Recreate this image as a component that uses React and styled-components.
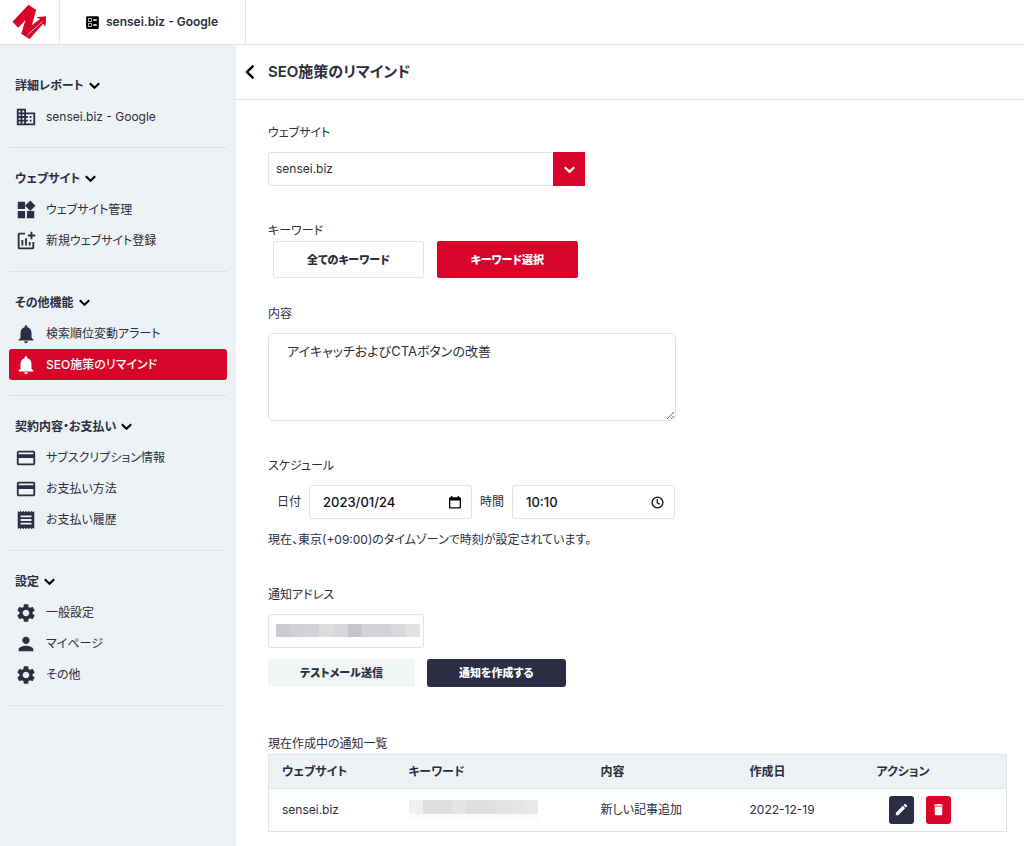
import React, { useState } from "react";
import styled, { createGlobalStyle } from "styled-components";
import {
  MdAddchart,
  MdBallot,
  MdBusiness,
  MdCreditCard,
  MdDelete,
  MdEdit,
  MdNotifications,
  MdPerson,
  MdReceipt,
  MdSettings,
  MdWidgets,
} from "react-icons/md";

const menu = [
  {
    title: "詳細レポート",
    items: [{ label: "sensei.biz - Google", icon: MdBusiness }],
  },
  {
    title: "ウェブサイト",
    items: [
      { label: "ウェブサイト管理", icon: MdWidgets },
      { label: "新規ウェブサイト登録", icon: MdAddchart },
    ],
  },
  {
    title: "その他機能",
    items: [
      { label: "検索順位変動アラート", icon: MdNotifications },
      { label: "SEO施策のリマインド", icon: MdNotifications, active: true },
    ],
  },
  {
    title: "契約内容・お支払い",
    items: [
      { label: "サブスクリプション情報", icon: MdCreditCard },
      { label: "お支払い方法", icon: MdCreditCard },
      { label: "お支払い履歴", icon: MdReceipt },
    ],
  },
  {
    title: "設定",
    items: [
      { label: "一般設定", icon: MdSettings },
      { label: "マイページ", icon: MdPerson },
      { label: "その他", icon: MdSettings },
    ],
  },
];

const emailBlocks = ["#cbcad1", "#d0cfd5", "#d2d2d6", "#dddddf", "#d8d8db", "#c5c4cc", "#d2d1d7", "#d2d1d7", "#d9d9db", "#e2e2e3"];
const keywordBlocks = ["#edf1f3", "#dedede", "#dedede", "#e4e5e5", "#dfdfdf", "#e0e0e0", "#e4e4e4", "#e6e6e7", "#e7e8e8"];

function Chevron({ color = "#000" }) {
  return (
    <svg width="11" height="11" viewBox="0 0 11 11" fill="none" stroke={color} strokeWidth="2" aria-hidden="true">
      <path d="M0.8 3.2 5.5 7.8 10.2 3.2" />
    </svg>
  );
}

function Logo() {
  return (
    <svg width="35" height="36" viewBox="12 13 104 108" aria-hidden="true">
      <path
        fill="#d90429"
        d="M13 66 61 15 84 31 71 77 96 58 84 53 114 50 112 81 105 72 64 118 39 102 52 61 30 84Z"
      />
      <path fill="none" stroke="#fff" strokeWidth="2" d="M58 106 103 65" />
    </svg>
  );
}

function App() {
  const [content, setContent] = useState("アイキャッチおよびCTAボタンの改善");
  const [date, setDate] = useState("2023/01/24");
  const [time, setTime] = useState("10:10");

  return (
    <Page>
      <GlobalStyle />
      <TopBar>
        <LogoLink href="#" aria-label="ホーム">
          <Logo />
        </LogoLink>
        <SiteTab href="#">
          <MdBallot />
          sensei.biz - Google
        </SiteTab>
      </TopBar>
      <Body>
        <Sidebar>
          {menu.map((section) => (
            <Section key={section.title}>
              <SectionTitle type="button">
                {section.title}
                <Chevron />
              </SectionTitle>
              {section.items.map(({ label, icon: Icon, active }) => (
                <MenuLink key={label} href="#" $active={active}>
                  <Icon />
                  {label}
                </MenuLink>
              ))}
            </Section>
          ))}
        </Sidebar>
        <Main>
          <TitleBar>
            <BackButton type="button" aria-label="戻る">
              <svg width="10" height="16" viewBox="0 0 10 16" fill="none" stroke="#000" strokeWidth="2.4">
                <path d="M8.4 1.6 2 8l6.4 6.4" />
              </svg>
            </BackButton>
            <h1>SEO施策のリマインド</h1>
          </TitleBar>
          <Form onSubmit={(e) => e.preventDefault()}>
            <Field>
              <Label htmlFor="website">ウェブサイト</Label>
              <SelectBox>
                <select id="website" defaultValue="sensei.biz">
                  <option>sensei.biz</option>
                </select>
                <span>
                  <Chevron color="#fff" />
                </span>
              </SelectBox>
            </Field>
            <Field $gap="0" $space="26px">
              <Label as="div">キーワード</Label>
              <KeywordButtons>
                <ChoiceButton type="button">全てのキーワード</ChoiceButton>
                <ChoiceButton type="button" $selected>
                  キーワード選択
                </ChoiceButton>
              </KeywordButtons>
            </Field>
            <Field>
              <Label htmlFor="content">内容</Label>
              <TextArea id="content" value={content} onChange={(e) => setContent(e.target.value)} />
            </Field>
            <Field>
              <Label as="div">スケジュール</Label>
              <Schedule>
                <label htmlFor="date">日付</label>
                <PickerBox>
                  <input id="date" value={date} onChange={(e) => setDate(e.target.value)} />
                  <svg width="12" height="13" viewBox="0 0 12 13" aria-hidden="true">
                    <path
                      fill="#000"
                      fillRule="evenodd"
                      d="M2 0h1.4v1.2h5.2V0H10v1.2h.7c.7 0 1.3.6 1.3 1.3v8.7c0 .7-.6 1.3-1.3 1.3H1.3C.6 12.5 0 11.9 0 11.2V2.5c0-.7.6-1.3 1.3-1.3H2ZM1.3 4.4v6.8h9.4V4.4Z"
                    />
                  </svg>
                </PickerBox>
                <label htmlFor="time">時間</label>
                <PickerBox>
                  <input id="time" value={time} onChange={(e) => setTime(e.target.value)} />
                  <svg width="13" height="13" viewBox="0 0 13 13" fill="none" stroke="#111" strokeWidth="1.3" aria-hidden="true">
                    <circle cx="6.5" cy="6.5" r="5.4" />
                    <path d="M6.3 3.3v3.5l2.5 1.5" />
                  </svg>
                </PickerBox>
              </Schedule>
              <Note>現在、東京(+09:00)のタイムゾーンで時刻が設定されています。</Note>
            </Field>
            <Field $space="47px">
              <Label htmlFor="email">通知アドレス</Label>
              <EmailBox>
                <input id="email" type="email" />
                <Mosaic>
                  {emailBlocks.map((color, i) => (
                    <i key={i} style={{ background: color }} />
                  ))}
                </Mosaic>
              </EmailBox>
              <FormButtons>
                <FormButton type="button">テストメール送信</FormButton>
                <FormButton type="submit" $primary>
                  通知を作成する
                </FormButton>
              </FormButtons>
            </Field>
            <Table>
              <caption>現在作成中の通知一覧</caption>
              <colgroup>
                <col width="127" />
                <col width="192" />
                <col width="149" />
                <col width="127" />
                <col />
              </colgroup>
              <thead>
                <tr>
                  <th>ウェブサイト</th>
                  <th>キーワード</th>
                  <th>内容</th>
                  <th>作成日</th>
                  <th>アクション</th>
                </tr>
              </thead>
              <tbody>
                <tr>
                  <td>sensei.biz</td>
                  <td>
                    <KeywordMask>
                      {keywordBlocks.map((color, i) => (
                        <i key={i} style={{ background: color }} />
                      ))}
                    </KeywordMask>
                  </td>
                  <td>新しい記事追加</td>
                  <td>2022-12-19</td>
                  <td>
                    <Actions>
                      <IconButton type="button" aria-label="編集">
                        <MdEdit />
                      </IconButton>
                      <IconButton type="button" aria-label="削除" $danger>
                        <MdDelete />
                      </IconButton>
                    </Actions>
                  </td>
                </tr>
              </tbody>
            </Table>
          </Form>
        </Main>
      </Body>
    </Page>
  );
}

const GlobalStyle = createGlobalStyle`
  * {
    box-sizing: border-box;
  }
  body {
    margin: 0;
    color: #2b2d42;
    background: #fff;
    font-family: Inter, "Noto Sans CJK JP", sans-serif;
    font-size: 12px;
    line-height: 20px;
    font-feature-settings: "palt";
  }
  button, input, select, textarea {
    font: inherit;
    font-feature-settings: inherit;
    color: inherit;
  }
  button {
    cursor: pointer;
  }
  a {
    color: inherit;
    text-decoration: none;
  }
`;

const Page = styled.div`
  display: flex;
  flex-direction: column;
  min-height: 100vh;
`;

const TopBar = styled.header`
  display: flex;
  height: 45px;
  border-bottom: 1px solid #e3e4e6;
`;

const LogoLink = styled.a`
  display: flex;
  align-items: center;
  justify-content: center;
  width: 60px;
  border-right: 1px solid #e3e4e6;
`;

const SiteTab = styled.a`
  display: flex;
  align-items: center;
  gap: 5px;
  padding: 0 27px 0 24px;
  border-right: 1px solid #e3e4e6;
  font-weight: 600;
  svg {
    width: 17px;
    height: 17px;
    color: #000;
  }
`;

const Body = styled.div`
  display: flex;
  flex: 1;
`;

const Sidebar = styled.nav`
  flex: 0 0 236px;
  padding: 10px 9px;
  background: #edf2f4;
`;

const Section = styled.section`
  padding: 15px 0;
  border-bottom: 1px solid #dfe3e6;
`;

const SectionTitle = styled.button`
  display: flex;
  align-items: center;
  gap: 5px;
  height: 31px;
  padding: 0 6px;
  border: 0;
  background: none;
  font-weight: 700;
`;

const MenuLink = styled.a`
  display: flex;
  align-items: center;
  gap: 9px;
  height: 31px;
  padding: 0 6px;
  border-radius: 3px;
  color: ${({ $active }) => ($active ? "#fff" : "#2b2d42")};
  background: ${({ $active }) => ($active ? "#d90429" : "transparent")};
  font-weight: ${({ $active }) => ($active ? 500 : 400)};
  svg {
    width: 22px;
    height: 22px;
  }
`;

const Main = styled.main`
  flex: 1;
  min-width: 0;
`;

const TitleBar = styled.div`
  display: flex;
  align-items: center;
  gap: 13px;
  height: 55px;
  padding: 0 9px;
  border-bottom: 1px solid #e3e4e6;
  h1 {
    margin: 0;
    font-size: 15px;
    font-weight: 600;
  }
`;

const BackButton = styled.button`
  display: flex;
  padding: 0;
  border: 0;
  background: none;
`;

const Form = styled.form`
  padding: 23px 17px 15px 32px;
`;

const Field = styled.div`
  display: flex;
  flex-direction: column;
  align-items: flex-start;
  gap: ${({ $gap }) => $gap || "9px"};
  margin-bottom: ${({ $space }) => $space || "35px"};
`;

const Label = styled.label`
  display: block;
`;

const SelectBox = styled.div`
  display: grid;
  grid-template-columns: 1fr 32px;
  width: 317px;
  height: 34px;
  select {
    grid-area: 1 / 1 / 2 / 3;
    appearance: none;
    padding: 0 7px;
    border: 1px solid #e3e4e6;
    border-radius: 2px;
    background: #fff;
  }
  span {
    grid-area: 1 / 2;
    display: flex;
    align-items: center;
    justify-content: center;
    background: #d90429;
    pointer-events: none;
  }
`;

const KeywordButtons = styled.div`
  display: flex;
  gap: 13px;
  padding-left: 5px;
`;

const ChoiceButton = styled.button`
  height: 37px;
  padding: 0 33px;
  border: 1px solid ${({ $selected }) => ($selected ? "#d90429" : "#e3e4e6")};
  border-radius: 2px;
  color: ${({ $selected }) => ($selected ? "#fff" : "#2b2d42")};
  background: ${({ $selected }) => ($selected ? "#d90429" : "#fff")};
  font-size: 11px;
  font-weight: 800;
`;

const TextArea = styled.textarea`
  width: 408px;
  height: 88px;
  padding: 7px 18px;
  border: 1px solid #dfe1e3;
  border-radius: 5px;
  outline: none;
  font-size: 13px;
`;

const Schedule = styled.div`
  display: flex;
  align-items: center;
  gap: 8px;
  padding-left: 9px;
`;

const PickerBox = styled.div`
  display: flex;
  align-items: center;
  width: 163px;
  height: 34px;
  padding: 0 10px 0 13px;
  border: 1px solid #e3e4e6;
  border-radius: 2px;
  input {
    flex: 1;
    min-width: 0;
    padding: 0;
    border: 0;
    outline: none;
    color: #111;
    background: none;
    font-size: 13px;
    font-weight: 500;
  }
`;

const Note = styled.p`
  margin: 2px 0 0;
`;

const EmailBox = styled.div`
  position: relative;
  input {
    display: block;
    width: 156px;
    height: 34px;
    padding: 0 8px;
    border: 1px solid #e3e4e6;
    border-radius: 2px;
  }
`;

const Mosaic = styled.div`
  position: absolute;
  inset: 10px 4px 11px 8px;
  display: flex;
  pointer-events: none;
  i {
    flex: 1;
  }
`;

const FormButtons = styled.div`
  display: flex;
  gap: 12px;
  margin-top: 2px;
`;

const FormButton = styled.button`
  height: 28px;
  padding: 0 32px;
  border: 0;
  border-radius: 3px;
  color: ${({ $primary }) => ($primary ? "#fff" : "#2b2d42")};
  background: ${({ $primary }) => ($primary ? "#2b2d42" : "#f1f5f6")};
  font-size: 11px;
  font-weight: 800;
`;

const Table = styled.table`
  width: 100%;
  border: 1px solid #e3e4e6;
  border-collapse: collapse;
  table-layout: fixed;
  caption {
    text-align: left;
  }
  th {
    height: 34px;
    padding: 0 13px;
    border-bottom: 1px solid #e3e4e6;
    background: #edf2f4;
    font-weight: 700;
    text-align: left;
  }
  td {
    height: 43px;
    padding: 0 13px;
  }
`;

const KeywordMask = styled.div`
  display: flex;
  width: 130px;
  height: 21px;
  border-bottom: 7px solid #fbfbfb;
  i {
    flex: 1;
  }
`;

const Actions = styled.div`
  display: flex;
  gap: 12px;
  padding-left: 12px;
`;

const IconButton = styled.button`
  display: flex;
  align-items: center;
  justify-content: center;
  width: 25px;
  height: 28px;
  padding: 0 0 2px;
  border: 0;
  border-radius: 3px;
  color: #fff;
  background: ${({ $danger }) => ($danger ? "#d90429" : "#2b2d42")};
  svg {
    width: 15px;
    height: 15px;
  }
`;

export default App;
